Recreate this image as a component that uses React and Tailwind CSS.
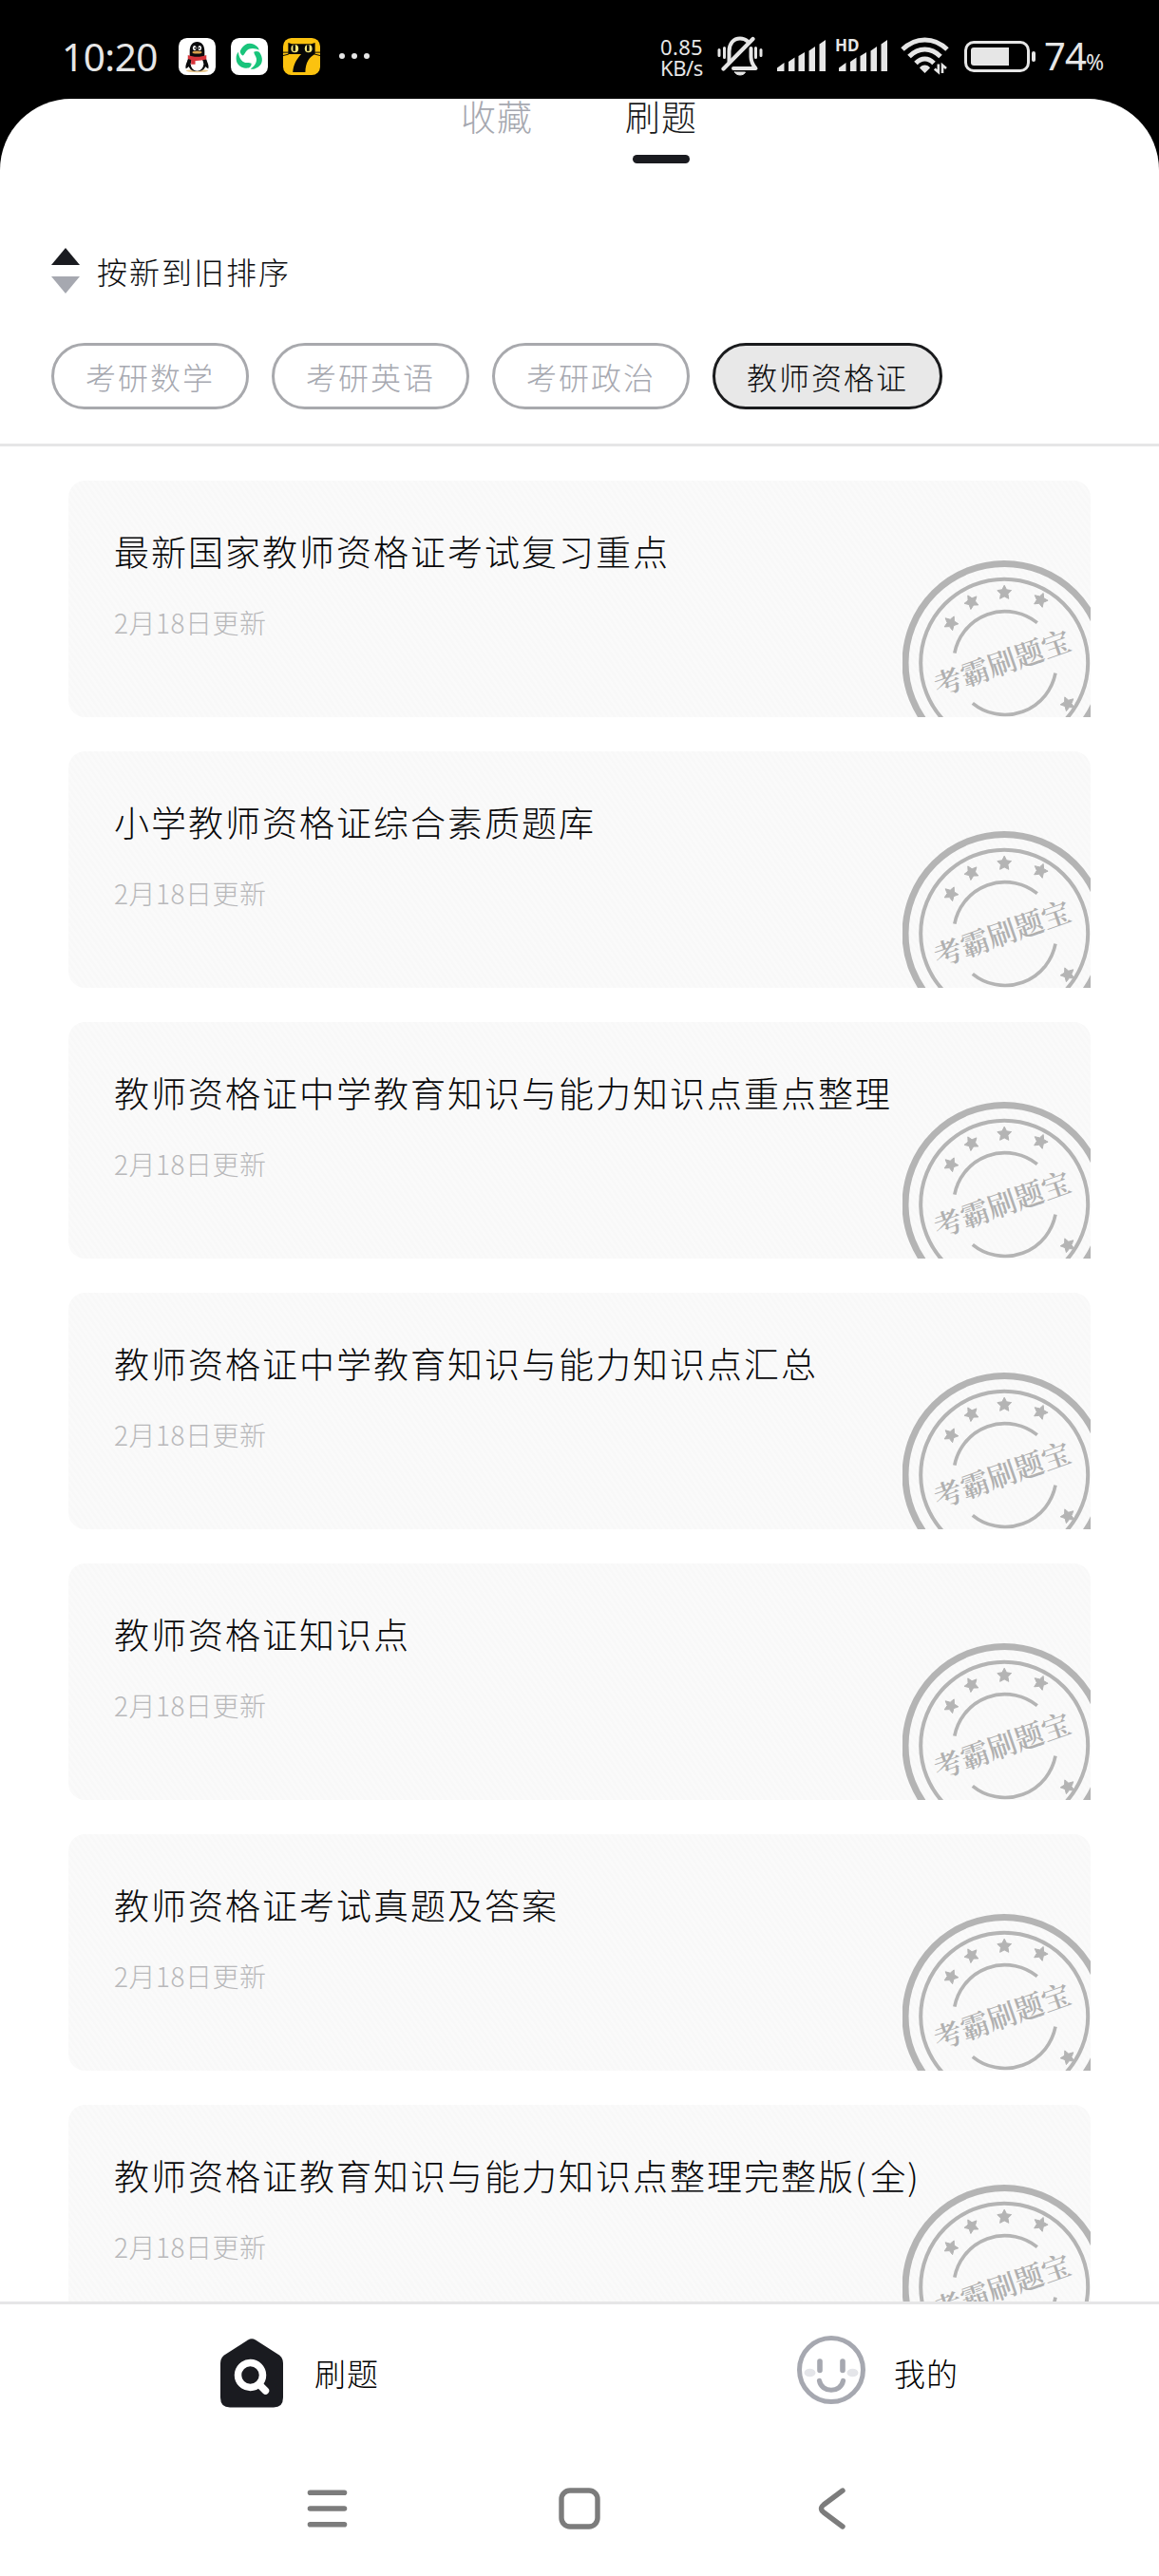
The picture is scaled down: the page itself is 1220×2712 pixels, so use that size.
import { useState } from "react";

const CATEGORIES = ["考研数学", "考研英语", "考研政治", "教师资格证"];

const PAPERS = [
  { id: 1, title: "最新国家教师资格证考试复习重点", date: "2月18日更新" },
  { id: 2, title: "小学教师资格证综合素质题库", date: "2月18日更新" },
  { id: 3, title: "教师资格证中学教育知识与能力知识点重点整理", date: "2月18日更新" },
  { id: 4, title: "教师资格证中学教育知识与能力知识点汇总", date: "2月18日更新" },
  { id: 5, title: "教师资格证知识点", date: "2月18日更新" },
  { id: 6, title: "教师资格证考试真题及答案", date: "2月18日更新" },
  { id: 7, title: "教师资格证教育知识与能力知识点整理完整版(全)", date: "2月18日更新" },
];

function starPoints(cx, cy, r, rot) {
  const pts = [];
  for (let i = 0; i < 10; i++) {
    const a = ((rot - 90 + i * 36) * Math.PI) / 180;
    const d = i % 2 ? r * 0.5 : r;
    pts.push(`${(cx + d * Math.cos(a)).toFixed(1)},${(cy + d * Math.sin(a)).toFixed(1)}`);
  }
  return pts.join(" ");
}

const STARS = [
  [51, 66, -48],
  [72.7, 43.7, -30],
  [107.2, 34, 0],
  [145.3, 41.7, 22],
  [174, 151, 120],
];

function Stamp() {
  return (
    <svg viewBox="0 0 198 165" className="absolute right-0 bottom-0 w-[198px] h-[165px]" fill="none" stroke="#b4b4b4">
      <circle cx="107.2" cy="107.7" r="104.2" strokeWidth="7" />
      <circle cx="107.2" cy="107.7" r="88" strokeWidth="4" />
      <path d="M54.8 97.7A54 54 0 0 1 141.8 65.6" strokeWidth="3.6" />
      <path d="M161 118.7A54 54 0 0 1 73.8 150.3" strokeWidth="3.6" />
      {STARS.map(([x, y, rot]) => (
        <polygon key={x} points={starPoints(x, y, 7.8, rot)} fill="#b4b4b4" />
      ))}
      <text
        x="105"
        y="119"
        textAnchor="middle"
        transform="rotate(-19.3 105 108.5)"
        fill="#b0b0b0"
        stroke="none"
        className="font-['Noto_Serif_CJK_SC','Noto_Sans_CJK_SC',serif] text-[30px] font-semibold"
      >
        考霸刷题宝
      </text>
    </svg>
  );
}

function PaperCard({ paper }) {
  return (
    <div className="relative shrink-0 h-[249px] rounded-l-[18px] rounded-tr-[18px] overflow-hidden bg-[#f9f9f9] bg-[repeating-linear-gradient(55deg,#f8f8f8_0px,#f8f8f8_2px,#fafafa_3px,#fafafa_5px)] pl-[48px] pt-[46px]">
      <h3 className="text-[37px] leading-[56px] tracking-[2px] text-[#08080a] font-light whitespace-nowrap">
        {paper.title.split(/([()])/).map((part, i) =>
          part === "(" || part === ")" ? (
            <span key={i} className="tracking-[4.500px]">{part}</span>
          ) : (
            part
          )
        )}
      </h3>
      <p className="mt-[19px] text-[28px] leading-[56px] tracking-[0.500px] text-[#b8b8ba] font-light">{paper.date}</p>
      <Stamp />
    </div>
  );
}

/* Notification icons */
function QQIcon() {
  return (
    <svg viewBox="0 0 40 40" className="w-[39px] h-[39px]">
      <rect width="40" height="40" rx="9" fill="#fff" />
      <ellipse cx="20" cy="35.5" rx="12" ry="1.6" fill="#e8c58a" />
      <path d="M11 22c-3 5-4 9-3 11 1 0 3-2 4-3l1-7zM29 22c3 5 4 9 3 11-1 0-3-2-4-3l-1-7z" fill="#0b0b0d" />
      <path d="M12 14c0-6 3-10 8-10s8 4 8 10v5c3 4 3 9 1 12-2 4-5 5-9 5s-7-1-9-5c-2-3-2-8 1-12z" fill="#0b0b0d" />
      <ellipse cx="20" cy="28" rx="7" ry="7.6" fill="#fff" />
      <ellipse cx="17.2" cy="10.8" rx="1.9" ry="2.7" fill="#fff" />
      <ellipse cx="22.8" cy="10.8" rx="1.9" ry="2.7" fill="#fff" />
      <circle cx="17.8" cy="11" r=".9" fill="#000" />
      <circle cx="22.2" cy="11" r=".9" fill="#000" />
      <ellipse cx="20" cy="15.4" rx="5.2" ry="1.6" fill="#d9a04e" />
      <path d="M10 18.5c6 2.4 14 2.4 20 0v4.5c-4 1-8 1.6-12 1.5v4h-4.5v-5L10 22.5z" fill="#d8343b" />
    </svg>
  );
}

const BLADE = "M10 14C13 7 19 4 25 7C28 8.5 30 10.5 30.5 13C26 10.5 19 10 16 15C15 17 14 18 13 19C11 18 10 16 10 14z";

function SwirlIcon() {
  return (
    <svg viewBox="0 0 40 40" className="w-[39px] h-[39px]">
      <rect width="40" height="40" rx="9" fill="#fff" />
      <g fill="#19c47b">
        <path d={BLADE} />
        <path d={BLADE} transform="rotate(120 20 20.5)" />
        <path d={BLADE} transform="rotate(240 20 20.5)" />
      </g>
    </svg>
  );
}

function CatIcon() {
  return (
    <svg viewBox="0 0 40 40" className="w-[39px] h-[39px]">
      <rect width="40" height="40" rx="9" fill="#fbc20f" />
      <path d="M5.5 5l4 1.5h21l4-1.5v12.5c-6 3-10.5 9-10.500 19.5H10.500c.5-8 4-14 9-19.500h-14z" fill="#060606" />
      <path d="M0 15.500h6M0 19l6-1.500M34 15.500h6M34 17.500l6 1.500" stroke="#060606" strokeWidth="1" />
      <ellipse cx="12.6" cy="11.5" rx="4" ry="4.2" fill="#f4e778" />
      <ellipse cx="27.4" cy="11.5" rx="4" ry="4.2" fill="#f4e778" />
      <path d="M12 7.500v6.500M27 7.500v6.500" stroke="#060606" strokeWidth="2.6" />
    </svg>
  );
}

function MutedBell() {
  return (
    <svg viewBox="0 0 48 42" className="w-[48px] h-[42px]" fill="none" stroke="#e6e6e6" strokeLinecap="round" strokeLinejoin="round">
      <path d="M12.500 27V16C12.500 8 17 2.500 24 2.500C27.500 2.500 30 3.700 32 5.500M35.500 13V22C35.500 27 37 30 40.500 34H17" strokeWidth="4" />
      <path d="M6.500 34.500L37.500 3" strokeWidth="4.2" />
      <path d="M18.500 38h11c-1.500 4-9.500 4-11 0z" fill="#e6e6e6" strokeWidth="1" />
      <path d="M2 14.500v6M7.500 12.500v10M40.500 12.500v10M46 14.500v6" strokeWidth="3" />
    </svg>
  );
}

function SignalBars() {
  return (
    <svg viewBox="0 0 52 34" className="w-[52px] h-[34px]" fill="#e6e6e6">
      <path d="M0 29.500L7.500 24V33H0zM12 23L18.500 18.500V33H12zM22.500 17L29 13V33H22.500zM33.500 11.500L40 7V33H33.500zM44.500 4.500L51 0V33H44.500z" />
    </svg>
  );
}

function WifiIcon() {
  return (
    <svg viewBox="0 0 52 40" className="w-[52px] h-[40px]" fill="none" stroke="#e6e6e6" strokeWidth="5">
      <path d="M2 13C16-.5 35-.5 49 13" />
      <path d="M9 20.500C19 10.500 32 10.500 42 20.500" />
      <path d="M16 27.500C22 21.500 29 21.500 35 27.500" />
      <path d="M25.500 38L20 32.500C22 28.500 29 28.500 31 32.500z" fill="#e6e6e6" stroke="none" />
      <path d="M39.800 28.500v8.500l-4-3.500M44 38v-8.500l4 3.500" strokeWidth="2.6" />
    </svg>
  );
}

function StatusBar() {
  return (
    <div className="h-[104px] shrink-0 pl-[65px] pr-[58px] pt-[17px] pb-[3px] flex items-center justify-between text-[#e6e6e6]">
      <div className="flex items-center">
        <span className="w-[123px] font-['Noto_Sans',sans-serif] text-[40.5px] leading-[44px] tracking-[-0.5px] mt-[2px]">10:20</span>
        <div className="flex gap-[16px]">
          <QQIcon />
          <SwirlIcon />
          <CatIcon />
        </div>
        <div className="ml-[20px] flex gap-[7px]">
          <i className="w-[6px] h-[6px] rounded-full bg-[#e6e6e6]" />
          <i className="w-[6px] h-[6px] rounded-full bg-[#e6e6e6]" />
          <i className="w-[6px] h-[6px] rounded-full bg-[#e6e6e6]" />
        </div>
      </div>
      <div className="flex items-center">
        <div className="w-[60px] font-['Noto_Sans',sans-serif] text-[22px] leading-[22px] mt-[1px]">
          <p className="tracking-[0.3px]">0.85</p>
          <p className="tracking-[-0.5px]">KB/s</p>
        </div>
        <MutedBell />
        <div className="ml-[15px]">
          <SignalBars />
        </div>
        <div className="relative ml-[13px]">
          <SignalBars />
          <span className="absolute left-[-4px] top-[-3px] font-['Noto_Sans',sans-serif] text-[17px] leading-[17px] font-bold">HD</span>
        </div>
        <div className="ml-[13px]">
          <WifiIcon />
        </div>
        <div className="ml-[15px] w-[69px] h-[33px] border-[3px] border-[#e6e6e6] rounded-[10px] p-[4px]">
          <div className="w-[40px] h-full bg-[#e6e6e6] rounded-l-[3px]" />
        </div>
        <div className="ml-[2px] w-[4px] h-[11px] rounded-[2px] bg-[#e6e6e6]" />
        <div className="ml-[9px] flex items-baseline font-['Noto_Sans',sans-serif]">
          <span className="text-[40px] leading-[44px] tracking-[-1px]">74</span>
          <span className="text-[23px] leading-[24px]">%</span>
        </div>
      </div>
    </div>
  );
}

function BottomNav() {
  return (
    <nav className="h-[149px] shrink-0 border-t-[3px] border-[#e6e6e7] bg-white grid grid-cols-2 text-[33px] leading-[50px] tracking-[1px] font-light text-black">
      <button className="flex items-start pl-[232px] pt-[36px]">
        <svg viewBox="0 0 66 73" className="w-[66px] h-[73px]">
          <path d="M29 1.500Q33-1 37 1.500L62 17.500Q66 20.500 66 26V62Q66 72.500 56 72.500H10Q0 72.500 0 62V26Q0 20.500 4 17.500z" fill="#1a1b20" />
          <circle cx="31.5" cy="38.5" r="13" fill="none" stroke="#fff" strokeWidth="7.5" />
          <path d="M41 48.500l6.500 6.500" stroke="#fff" strokeWidth="7.5" strokeLinecap="round" />
        </svg>
        <span className="ml-[33px] mt-[11px]">刷题</span>
      </button>
      <button className="flex items-start pl-[229px] pt-[33px]">
        <svg viewBox="0 0 72 72" className="w-[72px] h-[72px]" fill="none" stroke="#a6a8b0" strokeLinecap="round">
          <circle cx="36" cy="36" r="33.5" strokeWidth="5" />
          <ellipse cx="13.5" cy="39" rx="6" ry="4.3" fill="#e4e5e9" stroke="none" />
          <ellipse cx="58.5" cy="39" rx="6" ry="4.3" fill="#e4e5e9" stroke="none" />
          <path d="M24 27v9.500M48 27v9.500" strokeWidth="5.6" />
          <path d="M23.500 47.500C26 60.500 46 60.500 48.500 47.500" strokeWidth="5.2" />
        </svg>
        <span className="ml-[30px] mt-[14px]">我的</span>
      </button>
    </nav>
  );
}

function SystemNav() {
  return (
    <div className="h-[140px] shrink-0 bg-white flex justify-between pl-[322px] pr-[322px] pt-[45px]">
      <svg viewBox="0 0 46 48" className="w-[46px] h-[48px]" stroke="#7c7c7c" strokeWidth="5.6" strokeLinecap="round">
        <path d="M4.500 7.300h36M4.500 24h36M4.500 40.700h36" />
      </svg>
      <svg viewBox="0 0 48 48" className="w-[48px] h-[48px]" fill="none" stroke="#7c7c7c" strokeWidth="5.4">
        <rect x="5" y="5" width="38" height="38" rx="9" />
      </svg>
      <svg viewBox="0 0 46 48" className="w-[46px] h-[48px]" fill="none" stroke="#7c7c7c" strokeWidth="5.4" strokeLinecap="round">
        <path d="M35 5L15 20Q10 24 15 28L35 43" />
      </svg>
    </div>
  );
}

export default function App() {
  const [category, setCategory] = useState("教师资格证");

  return (
    <div className="w-[1220px] h-[2712px] flex flex-col overflow-hidden bg-black font-['Noto_Sans_CJK_SC',sans-serif]">
      <StatusBar />

      <div className="flex-1 min-h-0 flex flex-col overflow-hidden bg-white rounded-t-[75px]">
        {/* Tabs */}
        <div className="h-[140px] shrink-0 flex gap-[97px] pl-[485px] text-[37px] leading-[37px] tracking-[1px] font-light">
          <button className="h-[37px] text-[#a6a8b0]">收藏</button>
          <div className="flex flex-col items-center">
            <button className="h-[37px] text-[#1a1b20]">刷题</button>
            <div className="mt-[22px] w-[60px] h-[9px] rounded-full bg-[#1a1b20]" />
          </div>
        </div>

        {/* Sort */}
        <div className="h-[82px] shrink-0 flex items-center pl-[54px] gap-[18px]">
          <svg viewBox="0 0 30 48" className="w-[30px] h-[48px]">
            <path d="M15 0L30 18H0z" fill="#1a1b20" />
            <path d="M15 48L30 30H0z" fill="#a6a8b0" />
          </svg>
          <span className="text-[32px] leading-[40px] tracking-[2px] font-light text-[#0c0c0e]">按新到旧排序</span>
        </div>

        {/* Categories */}
        <div className="h-[144px] shrink-0 border-b-[3px] border-[#e6e6e7] flex items-start gap-[24px] pl-[54px] pt-[35px]">
          {CATEGORIES.map((name) => (
            <button
              key={name}
              onClick={() => setCategory(name)}
              className={
                "h-[70px] px-[33px] border-[3px] rounded-full text-[32px] leading-[60px] tracking-[2px] font-light " +
                (name === category
                  ? "border-[#1a1b1d] bg-[#e8e8e8] text-[#0c0c0e]"
                  : "border-[#a8a9ad] bg-white text-[#a6a8b0]")
              }
            >
              {name}
            </button>
          ))}
        </div>

        {/* Papers */}
        <div className="flex-1 min-h-0 overflow-hidden flex flex-col gap-[36px] px-[72px] pt-[36px]">
          {PAPERS.map((paper) => (
            <PaperCard key={paper.id} paper={paper} />
          ))}
        </div>

        <BottomNav />
        <SystemNav />
      </div>
    </div>
  );
}
